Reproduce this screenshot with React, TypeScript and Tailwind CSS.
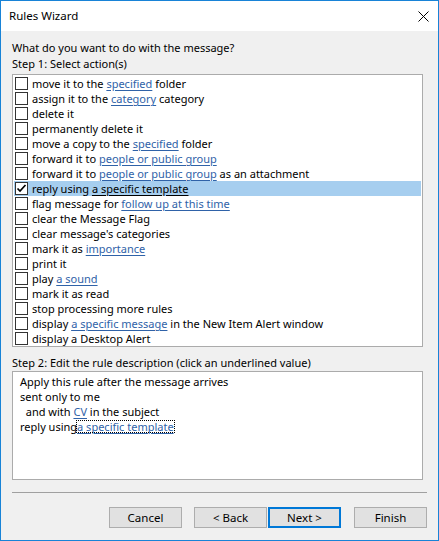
import React from "react"

type Part = { t: string; link?: boolean }

const actions: Part[][] = [
  [{ t: "move it to the " }, { t: "specified", link: true }, { t: " folder" }],
  [{ t: "assign it to the " }, { t: "category", link: true }, { t: " category" }],
  [{ t: "delete it" }],
  [{ t: "permanently delete it" }],
  [{ t: "move a copy to the " }, { t: "specified", link: true }, { t: " folder" }],
  [{ t: "forward it to " }, { t: "people or public group", link: true }],
  [{ t: "forward it to " }, { t: "people or public group", link: true }, { t: " as an attachment" }],
  [{ t: "reply using " }, { t: "a specific template", link: true }],
  [{ t: "flag message for " }, { t: "follow up at this time", link: true }],
  [{ t: "clear the Message Flag" }],
  [{ t: "clear message's categories" }],
  [{ t: "mark it as " }, { t: "importance", link: true }],
  [{ t: "print it" }],
  [{ t: "play " }, { t: "a sound", link: true }],
  [{ t: "mark it as read" }],
  [{ t: "stop processing more rules" }],
  [{ t: "display " }, { t: "a specific message", link: true }, { t: " in the New Item Alert window" }],
  [{ t: "display a Desktop Alert" }],
]

const SELECTED = 7

function Row({ parts, selected }: { parts: Part[]; selected: boolean }) {
  return (
    <div className={`flex items-center h-[15px] ${selected ? "bg-[#a6ceef]" : ""}`}>
      <div className="ml-[1px] w-[13px] h-[13px] border border-[#333333] bg-white flex items-center justify-center shrink-0">
        {selected && (
          <svg width="11" height="11" viewBox="0 0 11 11">
            <path d="M1.5 5.5 L4 8 L9.5 2" fill="none" stroke="#000" strokeWidth="1.7" />
          </svg>
        )}
      </div>
      <div className="ml-[4px] whitespace-pre leading-[15px] text-black">
        {parts.map((p, i) =>
          p.link ? (
            <span key={i} className={`underline underline-offset-2 ${selected ? "text-black" : "text-[#2f62a8]"}`}>
              {p.t}
            </span>
          ) : (
            <span key={i}>{p.t}</span>
          )
        )}
      </div>
    </div>
  )
}

function Btn({ label, focus }: { label: string; focus?: boolean }) {
  return (
    <div
      className={`w-[73px] h-[21px] bg-[#e1e1e1] flex items-center justify-center text-black text-[11.5px] ${
        focus ? "border-2 border-[#0078d7]" : "border border-[#adadad]"
      }`}
    >
      {label}
    </div>
  )
}

export default function App() {
  return (
    <div
      className="w-[439px] h-[541px] border border-[#1883d7] flex flex-col text-[11px] bg-[#f0f0f0]"
      style={{ fontFamily: '"Noto Sans", "DejaVu Sans", sans-serif' }}
    >
      <div className="h-[30px] bg-white flex items-center justify-between pl-[8px] pr-[9px] shrink-0">
        <span className="text-black text-[11.5px]">Rules Wizard</span>
        <svg width="11" height="11" viewBox="0 0 11 11">
          <path d="M0.5 0.5 L10.5 10.5 M10.5 0.5 L0.5 10.5" stroke="#000" strokeWidth="1" />
        </svg>
      </div>

      <div className="flex-1 flex flex-col pl-[11px] pt-[9px]">
        <div className="leading-[16px] text-black">What do you want to do with the message?</div>
        <div className="leading-[16px] text-black">Step 1: Select action(s)</div>

        <div className="mt-[2px] w-[411px] h-[273px] border border-[#ababab] bg-white pt-[1px] pl-[1px] pr-[1px]">
          {actions.map((a, i) => (
            <Row key={i} parts={a} selected={i === SELECTED} />
          ))}
        </div>

        <div className="mt-[8px] leading-[16px] text-black">Step 2: Edit the rule description (click an underlined value)</div>

        <div className="w-[411px] h-[109px] border border-[#ababab] bg-white pt-[2px] pl-[7px] leading-[15px] text-black whitespace-pre">
          <div>Apply this rule after the message arrives</div>
          <div>sent only to me</div>
          <div>
            {"  and with "}
            <span className="underline underline-offset-2 text-[#2f62a8]">CV</span>
            {" in the subject"}
          </div>
          <div className="flex">
            <span>reply using</span>
            <span className="outline outline-1 outline-dotted outline-black underline underline-offset-2 text-[#2f62a8] leading-[11px] self-center">
              a specific template
            </span>
          </div>
        </div>

        <div className="mt-[12px] w-[415px] h-px bg-[#a0a0a0]" />

        <div className="mt-[14px] w-[415px] flex justify-end">
          <Btn label="Cancel" />
          <div className="ml-[12px]">
            <Btn label="< Back" />
          </div>
          <div className="ml-[1px]">
            <Btn label="Next >" focus />
          </div>
          <div className="ml-[13px]">
            <Btn label="Finish" />
          </div>
        </div>
      </div>
    </div>
  )
}
